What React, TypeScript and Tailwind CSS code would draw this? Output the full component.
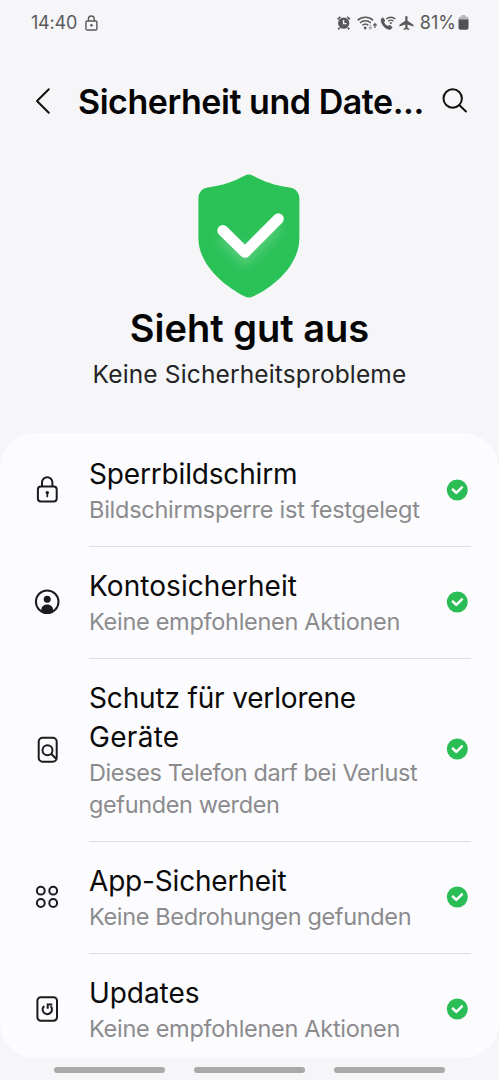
import React from 'react';

interface SecurityItem {
  title: string[];
  summary: string[];
  icon: React.ReactNode;
  titleClass: string[];
  summaryClass: string[];
}

const LockIcon = () => (
  <svg className="w-7 h-7" viewBox="0 0 28 28" fill="none" stroke="#1b1b1d" strokeWidth="2">
    <path d="M8 10.5V6.4a5.2 5.2 0 0 1 10.4 0v4.100" />
    <rect x="3.9" y="10.500" width="18.800" height="15" rx="3" />
    <circle cx="13.300" cy="16.600" r="1.700" fill="#1b1b1d" stroke="none" />
    <path d="M13.300 17v3.500" strokeWidth="1.700" strokeLinecap="round" />
  </svg>
);

const AccountIcon = () => (
  <svg className="w-7 h-7" viewBox="0 0 28 28" fill="none">
    <circle cx="13.2" cy="13.8" r="11.300" stroke="#1b1b1d" strokeWidth="2" />
    <circle cx="13.2" cy="11.2" r="3.500" fill="#1b1b1d" />
    <path d="M7.2 22.600c0-3.800 2.500-6 6-6s6 2.200 6 6a10 10 0 0 1-12 0z" fill="#1b1b1d" />
  </svg>
);

const FindDeviceIcon = () => (
  <svg className="w-7 h-7" viewBox="0 0 28 28" fill="none" stroke="#1b1b1d" strokeWidth="2">
    <rect x="4.700" y="1.800" width="18" height="24" rx="4" />
    <circle cx="13.500" cy="14.200" r="5" />
    <path d="M17.100 17.800l5 5" />
  </svg>
);

const AppsIcon = () => (
  <svg className="w-7 h-7" viewBox="0 0 28 28" fill="none" stroke="#1b1b1d" strokeWidth="2">
    <circle cx="6.800" cy="7.700" r="3.900" />
    <circle cx="19.200" cy="7.700" r="3.900" />
    <circle cx="6.800" cy="20" r="3.900" />
    <circle cx="19.200" cy="20" r="3.900" />
  </svg>
);

const UpdateIcon = () => (
  <svg className="w-7 h-7" viewBox="0 0 28 28" fill="none" stroke="#1b1b1d" strokeWidth="2">
    <rect x="3.400" y="2.200" width="19.600" height="23.500" rx="3.400" />
    <path d="M10.200 10.900a4.700 4.700 0 1 0 6.400.2" />
    <path d="M18.300 9.400h-4.600v4.300" />
  </svg>
);

const items: SecurityItem[] = [
  {
    title: ['Sperrbildschirm'],
    summary: ['Bildschirmsperre ist festgelegt'],
    icon: <LockIcon />,
    titleClass: ['tracking-[-0.17px]'],
    summaryClass: ['tracking-[-0.25px]'],
  },
  {
    title: ['Kontosicherheit'],
    summary: ['Keine empfohlenen Aktionen'],
    icon: <AccountIcon />,
    titleClass: ['tracking-[0.07px]'],
    summaryClass: ['tracking-[-0.29px]'],
  },
  {
    title: ['Schutz für verlorene', 'Geräte'],
    summary: ['Dieses Telefon darf bei Verlust', 'gefunden werden'],
    icon: <FindDeviceIcon />,
    titleClass: ['tracking-[-0.16px]', 'tracking-[0.3px]'],
    summaryClass: ['tracking-[-0.4px]', 'tracking-[-0.37px]'],
  },
  {
    title: ['App-Sicherheit'],
    summary: ['Keine Bedrohungen gefunden'],
    icon: <AppsIcon />,
    titleClass: ['tracking-[-0.18px]'],
    summaryClass: ['tracking-[-0.35px]'],
  },
  {
    title: ['Updates'],
    summary: ['Keine empfohlenen Aktionen'],
    icon: <UpdateIcon />,
    titleClass: ['tracking-[-0.07px]'],
    summaryClass: ['tracking-[-0.29px]'],
  },
];

function StatusBar() {
  return (
    <div className="flex h-[45px] shrink-0 items-center justify-between pl-[31px] pr-[30px] text-[#59595b]">
      <div className="flex items-center gap-[8px]">
        <span className="text-[18px] leading-none tracking-[-0.2px]">14:40</span>
        <svg className="h-4 w-[13px]" viewBox="0 0 14 17" fill="none" stroke="currentColor" strokeWidth="1.500">
          <path d="M3.700 6.300V4a3.100 3.100 0 0 1 6.200 0v2.300" />
          <rect x="1" y="6.300" width="11.800" height="9.700" rx="1.400" />
          <circle cx="6.900" cy="11" r="1.400" fill="currentColor" stroke="none" />
        </svg>
      </div>
      <div className="flex items-center">
        {/* Alarm */}
        <svg className="mr-[5px] h-4 w-4" viewBox="0 0 16 16" fill="none">
          <circle cx="7.700" cy="8.200" r="5.600" fill="#59595b" />
          <path d="M1.500 4.400l3-2.600M11 1.800l3 2.600M3.500 12.800l-1.300 1.600M12 12.800l1.300 1.600" stroke="#59595b" strokeWidth="1.700" />
          <path d="M7.600 5v3.600h3" stroke="#f6f6f8" strokeWidth="1.400" />
        </svg>
        {/* Wi-Fi */}
        <svg className="mr-[3px] h-4 w-[20px]" viewBox="0 0 20 16" fill="none" stroke="#59595b" strokeWidth="1.500">
          <path d="M.7 5.400a11.300 11.300 0 0 1 15.400 0M3 8a7.800 7.800 0 0 1 10.800 0M5.500 10.400a4.300 4.300 0 0 1 5.800 0" />
          <circle cx="8.200" cy="13" r="1.400" fill="#59595b" stroke="none" />
          <path d="M13.300 9.500V14m-1.600-1.800l1.600 1.800 1.600-1.800" stroke="#b0b0b3" strokeWidth="1.200" />
          <path d="M18 13V8.500m-1.700 2L18 8.700l1.700 1.800" strokeWidth="1.200" />
        </svg>
        {/* Wi-Fi calling */}
        <svg className="mr-[3px] h-4 w-4" viewBox="0 0 16 16" fill="none">
          <path d="M.8 4.300L2.800 2.300l2.400 3-1 1.900c.7 1.700 2 3 3.800 3.700l1.700-1.100 2.900 2.500-1.800 2.200c-1 .8-3.700.1-6.200-1.900C2 10.400.3 6.400.8 4.300z" fill="#59595b" />
          <path d="M6.300 4a6.600 6.600 0 0 1 9 0M8.200 6.300a4 4 0 0 1 5.200 0" stroke="#59595b" strokeWidth="1.300" />
          <circle cx="10.800" cy="8" r="1.100" fill="#59595b" />
        </svg>
        {/* Airplane mode */}
        <svg className="mr-[6px] h-4 w-[15px]" viewBox="0 0 15 16" fill="#59595b">
          <path d="M6.300 5.700V2.300c0-1.700 2.200-1.700 2.200 0v3.400l5.900 4v1.700l-5.900-1.800v3l1.800 1.300v1.200l-2.900-.8-2.900.8v-1.200l1.800-1.300v-3L.4 11.400V9.700z" />
        </svg>
        <span className="text-[18px] leading-none">81%</span>
        <svg className="ml-[2px] h-[15px] w-[11px]" viewBox="0 0 11 15">
          <path d="M3.300 1.600C3.300.3 4 0 5.500 0s2.200.3 2.200 1.600c1.900 0 2.800.7 2.800 2.400V5H.5V4c0-1.700.9-2.400 2.800-2.400z" fill="#b7b7ba" />
          <path d="M.5 4.500h10v8c0 1.500-.7 2.200-2.200 2.200H2.700c-1.500 0-2.200-.7-2.200-2.200z" fill="#515153" />
        </svg>
      </div>
    </div>
  );
}

function Header() {
  return (
    <header className="flex h-[113px] shrink-0 items-center pl-[34px]">
      <svg className="mb-px h-7 w-[18px]" viewBox="0 0 18 28" fill="none" stroke="#111" strokeWidth="2" strokeLinecap="round" strokeLinejoin="round">
        <path d="M14.800 2.300L3 14l11.800 11.700" />
      </svg>
      <h1 className="ml-[26px] w-[346px] whitespace-nowrap pt-px text-[34px] font-semibold leading-10 tracking-[-0.46px] text-[#050506]">
        Sicherheit und Date...
      </h1>
      <svg className="mb-px ml-[17px] h-7 w-7" viewBox="0 0 28 28" fill="none" stroke="#111" strokeWidth="2" strokeLinecap="round">
        <circle cx="11.700" cy="11.500" r="9.200" />
        <path d="M18.500 18.200l6.500 6.300" />
      </svg>
    </header>
  );
}

function Shield() {
  return (
    <svg className="mr-[1px] h-[126px] w-[104px]" viewBox="0 0 104 126" fill="none">
      <defs>
        <filter id="glow" x="-30%" y="-30%" width="160%" height="180%">
          <feGaussianBlur stdDeviation="6" />
        </filter>
      </defs>
      <path
        d="M47.500 2.700c3-1.500 5.500-1.500 8.500 0C67 8.500 77 12.300 91.500 14.200c6 .6 10.900 4.600 10.900 11.300V65c0 25-22 47-46 58.300-3 1.600-6 1.600-9 0C24 111 1.400 90 1.400 65V25.500c0-6.700 4.500-10.700 10.500-11.300C25 12.500 37 8.500 47.500 2.700z"
        fill="#2ac157"
      />
      <path d="M28 66l20 20 30-30" stroke="#fff" strokeOpacity=".28" strokeWidth="9" strokeLinecap="round" strokeLinejoin="round" filter="url(#glow)" />
      <path d="M25.800 57.500L48 79.300l33.300-33.500" stroke="#fff" strokeWidth="11" strokeLinecap="round" strokeLinejoin="round" />
    </svg>
  );
}

function CheckBadge() {
  return (
    <svg className="mb-[2px] h-[22px] w-[22px] shrink-0" viewBox="0 0 22 22" fill="none">
      <circle cx="11.300" cy="11" r="10.500" fill="#2abd55" />
      <path d="M6.800 10.500l3.500 3.400 5.600-5.500" stroke="#fff" strokeWidth="2.500" strokeLinecap="round" strokeLinejoin="round" />
    </svg>
  );
}

export default function App() {
  return (
    <div className="flex h-[1080px] w-[499px] flex-col overflow-hidden bg-[#f6f6f8] font-['Inter',sans-serif]">
      <StatusBar />
      <Header />

      {/* Overall status */}
      <section className="flex h-[275px] shrink-0 flex-col items-center pt-[15px]">
        <Shield />
        <h2 className="mt-[6px] whitespace-nowrap text-[38px] font-semibold leading-[46px] text-[#050506]">Sieht gut aus</h2>
        <p className="mt-[7px] whitespace-nowrap text-[24.5px] leading-8 tracking-[0.14px] text-[#242426]">Keine Sicherheitsprobleme</p>
      </section>

      {/* Security categories */}
      <main className="h-[625px] shrink-0 overflow-hidden rounded-[36px] bg-[#fcfcfe] pt-[2px]">
        {items.map((item, index) => (
          <div key={item.title[0]} className="flex pl-[34px] pr-7">
            <div className="flex w-[55px] shrink-0 items-center pb-[2px]">{item.icon}</div>
            <div className={`flex flex-1 items-center border-b py-5 ${index < items.length - 1 ? 'border-[#dfdfe2]' : 'border-transparent'}`}>
              <div className="w-[357px] shrink-0 whitespace-nowrap">
                {item.title.map((line, i) => (
                  <div key={line} className="text-[28px] leading-[39px] text-[#0a0a0b]">
                    <span className={item.titleClass[i]}>{line}</span>
                  </div>
                ))}
                {item.summary.map((line, i) => (
                  <div key={line} className="text-[23.5px] leading-8 text-[#8b8b8e]">
                    <span className={item.summaryClass[i]}>{line}</span>
                  </div>
                ))}
              </div>
              <CheckBadge />
            </div>
          </div>
        ))}
      </main>

      {/* Navigation hints */}
      <nav className="flex flex-1 items-center justify-center gap-[29px] pt-px">
        <span className="h-[6px] w-[111px] rounded-full bg-[#a9a9aa]" />
        <span className="h-[6px] w-[111px] rounded-full bg-[#a9a9aa]" />
        <span className="h-[6px] w-[111px] rounded-full bg-[#a9a9aa]" />
      </nav>
    </div>
  );
}
